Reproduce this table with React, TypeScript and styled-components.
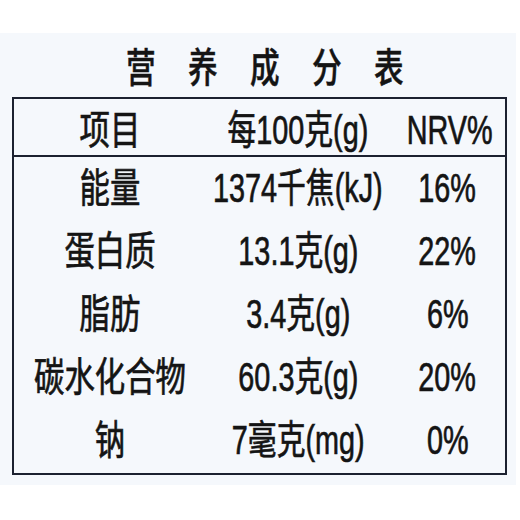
import React from 'react';
import styled, { createGlobalStyle } from 'styled-components';

const GlobalStyle = createGlobalStyle`
  html, body {
    margin: 0;
    padding: 0;
    background: #ffffff;
  }
  body {
    font-family: "Liberation Sans", "Noto Sans CJK SC", sans-serif;
    color: #141414;
  }
`;

const Page = styled.div`
  width: 520px;
  height: 520px;
  padding-top: 33px;
  box-sizing: border-box;
`;

const Sheet = styled.div`
  width: 516px;
  height: 452px;
  background: #f5f8fc;
  display: flex;
  flex-direction: column;
`;

const Title = styled.h1`
  margin: 0;
  height: 64px;
  display: flex;
  justify-content: center;
  align-items: center;
  gap: 32px;
  padding-left: 6px;
  font-family: "Noto Sans CJK SC", sans-serif;
  font-size: 40px;
  font-weight: 500;
  -webkit-text-stroke: 0.5px #141414;
`;

const TitleChar = styled.span`
  display: inline-block;
  width: 30px;
  text-align: center;
  transform: scaleX(0.74);
`;

const Table = styled.div`
  margin-left: 12px;
  width: 495px;
  height: 378px;
  box-sizing: border-box;
  border: 2px solid #1c2130;
  display: flex;
  flex-direction: column;
`;

const Row = styled.div<{ $head?: boolean }>`
  display: grid;
  grid-template-columns: 192px 184px 1fr;
  align-items: center;
  height: ${({ $head }) => ($head ? '58px' : '62.8px')};
  padding-top: ${({ $head }) => ($head ? '5px' : '0')};
  box-sizing: border-box;
  border-bottom: ${({ $head }) => ($head ? '2px solid #1c2130' : 'none')};
`;

const Cell = styled.div`
  display: flex;
  justify-content: center;
  font-size: 40px;
  line-height: 1;
  white-space: nowrap;
  -webkit-text-stroke: 0.7px #141414;
`;

const Squeeze = styled.span<{ $scale: number }>`
  display: inline-block;
  transform: scaleX(${({ $scale }) => $scale});
  transform-origin: center;
`;

const rows: [string, string, string][] = [
  ['能量', '1374千焦(kJ)', '16%'],
  ['蛋白质', '13.1克(g)', '22%'],
  ['脂肪', '3.4克(g)', '6%'],
  ['碳水化合物', '60.3克(g)', '20%'],
  ['钠', '7毫克(mg)', '0%'],
];

const TableRow: React.FC<{ cells: string[]; head?: boolean }> = ({ cells, head }) => (
  <Row $head={head}>
    {cells.map((c, i) => (
      <Cell key={i}>
        <Squeeze $scale={i === 0 ? 0.76 : 0.72}>{c}</Squeeze>
      </Cell>
    ))}
  </Row>
);

export default function App() {
  return (
    <>
      <GlobalStyle />
      <Page>
        <Sheet>
          <Title>
            {'营养成分表'.split('').map((ch) => (
              <TitleChar key={ch}>{ch}</TitleChar>
            ))}
          </Title>
          <Table>
            <TableRow head cells={['项目', '每100克(g)', 'NRV%']} />
            {rows.map((r) => (
              <TableRow key={r[0]} cells={r} />
            ))}
          </Table>
        </Sheet>
      </Page>
    </>
  );
}
